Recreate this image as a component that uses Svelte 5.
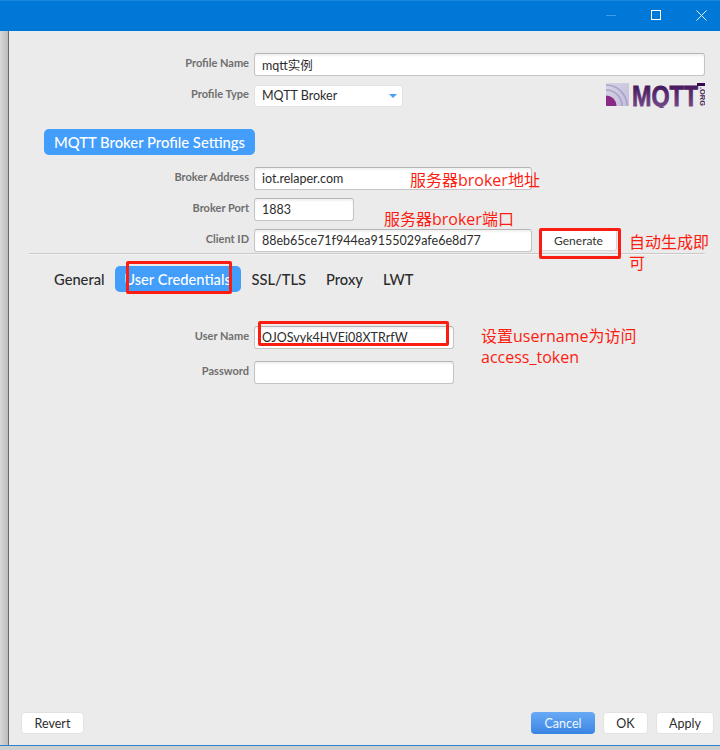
<script>
	const tabs = ['General', 'User Credentials', 'SSL/TLS', 'Proxy', 'LWT'];
	let activeTab = $state('User Credentials');

	let profileName = $state('mqtt实例');
	let brokerAddress = $state('iot.relaper.com');
	let brokerPort = $state('1883');
	let clientId = $state('88eb65ce71f944ea9155029afe6e8d77');
	let userName = $state('OJOSvyk4HVEi08XTRrfW');
	let password = $state('');
</script>

<div class="window">
	<header class="titlebar">
		<svg class="min" width="10" height="1" viewBox="0 0 10 1" aria-hidden="true"><rect width="10" height="1" fill="#3f9be3" /></svg>
		<svg class="max" width="10" height="10" viewBox="0 0 10 10" aria-hidden="true"><rect x="0.5" y="0.5" width="9" height="9" fill="none" stroke="#fff" /></svg>
		<svg class="close" width="11" height="11" viewBox="0 0 11 11" aria-hidden="true"><path d="M0.5 0.5l10 10M10.5 0.5l-10 10" fill="none" stroke="#e8f2fb" /></svg>
	</header>

	<div class="body">
		<div class="strip"></div>
		<main>
			<div class="row first">
				<label for="pname">Profile Name</label>
				<input id="pname" class="wide" bind:value={profileName} />
			</div>
			<div class="row type">
				<label for="ptype">Profile Type</label>
				<div id="ptype" class="select">MQTT Broker<span class="caret"></span></div>
				<svg class="logo" width="100" height="25" viewBox="0 0 100 25" aria-label="MQTT.org">
					<defs>
						<linearGradient id="mq" x1="0" y1="0" x2="0" y2="1">
							<stop offset="0" stop-color="#37084f" />
							<stop offset="1" stop-color="#7c5490" />
						</linearGradient>
						<linearGradient id="sq" x1="0" y1="0" x2="1" y2="1">
							<stop offset="0" stop-color="#d6d3e6" />
							<stop offset="1" stop-color="#c3bedb" />
						</linearGradient>
						<clipPath id="sqc"><rect width="23" height="23" rx="1" /></clipPath>
					</defs>
					<g transform="translate(1 0)" clip-path="url(#sqc)">
						<rect width="23" height="23" fill="url(#sq)" />
						<circle cx="0" cy="23" r="21" fill="none" stroke="#a9a4c9" stroke-width="1.6" />
						<circle cx="0" cy="23" r="16" fill="none" stroke="#a9a4c9" stroke-width="1.6" />
						<circle cx="0" cy="23" r="10.5" fill="#8b2a86" />
					</g>
					<text class="mqtt" x="27" y="22.5" textLength="66" lengthAdjust="spacingAndGlyphs" fill="url(#mq)" stroke="url(#mq)" stroke-width="0.8">MQTT</text>
					<rect x="92" y="0" width="8" height="3" fill="#37084f" />
					<text class="org" transform="translate(94.5 4) rotate(90)" textLength="19" lengthAdjust="spacingAndGlyphs">.ORG</text>
				</svg>
			</div>

			<div class="section"><span>MQTT Broker Profile Settings</span></div>

			<div class="row addr">
				<label for="addr">Broker Address</label>
				<input id="addr" class="mid" bind:value={brokerAddress} />
			</div>
			<div class="row port">
				<label for="port">Broker Port</label>
				<input id="port" class="short" bind:value={brokerPort} />
			</div>
			<div class="row client">
				<label for="cid">Client ID</label>
				<input id="cid" class="mid" bind:value={clientId} />
				<button class="generate">Generate</button>
			</div>

			<div class="tabs">
				{#each tabs as t}
					<button class="tab" class:active={activeTab === t} onclick={() => (activeTab = t)}>{t}</button>
				{/each}
			</div>

			<div class="row user">
				<label for="user">User Name</label>
				<input id="user" class="cred" bind:value={userName} />
			</div>
			<div class="row pass">
				<label for="pw">Password</label>
				<input id="pw" class="cred" type="password" bind:value={password} />
			</div>

			<footer>
				<button class="btn revert">Revert</button>
				<div class="right">
					<button class="btn cancel">Cancel</button>
					<button class="btn ok">OK</button>
					<button class="btn apply">Apply</button>
				</div>
			</footer>
		</main>
	</div>
	<div class="bottom"></div>

	<!-- red annotations drawn on top of the screenshot -->
	<div class="mark m-tab"></div>
	<div class="mark m-gen"></div>
	<div class="mark m-user"></div>
	<span class="note n-addr">服务器broker地址</span>
	<span class="note n-port">服务器broker端口</span>
	<span class="note n-gen">自动生成即<br />可</span>
	<span class="note n-user">设置username为访问<br />access_token</span>
</div>

<style>
	:global(body) {
		margin: 0;
		background: #ebebeb;
		font-family: Lato, "Noto Sans CJK SC", sans-serif;
	}
	.window {
		position: relative;
		width: 720px;
		height: 750px;
		display: flex;
		flex-direction: column;
		overflow: hidden;
		background: #ebebeb;
	}
	.titlebar {
		height: 31px;
		flex: none;
		box-sizing: border-box;
		border-top: 1px solid #1a86dc;
		background: #0078d7;
		display: flex;
		align-items: center;
		justify-content: flex-end;
		padding: 0 13px 2px 0;
	}
	.min {
		margin-right: 35px;
	}
	.max {
		margin-right: 35px;
	}
	.body {
		flex: 1;
		display: flex;
		min-height: 0;
	}
	.strip {
		width: 8px;
		flex: none;
		background: linear-gradient(90deg, #d8d8d8, #bcbcbc);
		border-right: 1px solid #6a6a6a;
	}
	main {
		flex: 1;
		display: flex;
		flex-direction: column;
		background: #ebebeb;
		padding: 0 15px 0 20px;
		min-width: 0;
	}
	.row {
		display: flex;
		align-items: center;
		position: relative;
	}
	label {
		width: 220px;
		margin-right: 5px;
		flex: none;
		text-align: right;
		font-size: 11px;
		font-weight: 700;
		color: #6f6f6f;
		padding-bottom: 4px;
	}
	input,
	.select {
		box-sizing: border-box;
		height: 23px;
		border: 1px solid #c4c4c4;
		border-top-color: #b4b4b4;
		border-radius: 3px;
		background: #fff;
		font-family: Lato, "Noto Sans CJK SC", sans-serif;
		font-size: 12.5px;
		color: #2c2c2c;
		padding: 0 7px 0;
		outline: none;
		box-shadow: inset 0 2px 2px #f2f2f2;
	}
	.wide {
		width: 451px;
	}
	.mid {
		width: 278px;
	}
	.short {
		width: 100px;
	}
	.cred {
		width: 200px;
	}
	.first {
		margin-top: 22px;
	}
	.type {
		margin-top: 7px;
		justify-content: space-between;
	}
	.select {
		width: 149px;
		height: 22px;
		border-color: #e2e2e2;
		box-shadow: none;
		display: flex;
		align-items: center;
		justify-content: space-between;
		margin-right: auto;
		padding-right: 5px;
	}
	.caret {
		width: 0;
		height: 0;
		border: 4px solid transparent;
		border-top: 4px solid #4a9df8;
		border-bottom: 0;
		margin-top: 1px;
	}
	.logo {
		flex: none;
		margin-top: 0;
	}
	.mqtt {
		font-family: "Liberation Sans", sans-serif;
		font-weight: 700;
		font-size: 30px;
	}
	.org {
		font-family: "Liberation Sans", sans-serif;
		font-weight: 700;
		font-size: 7px;
		fill: #3e1a58;
	}
	.section {
		margin: 21px 0 0 15px;
		display: flex;
	}
	.section span {
		display: block;
		width: 211px;
		height: 26px;
		box-sizing: border-box;
		background: #429dfb;
		border-radius: 5px;
		color: #fff;
		font-size: 14.8px;
		font-weight: 500;
		line-height: 26px;
		text-align: center;
	}
	.addr {
		margin-top: 12px;
	}
	.port,
	.client {
		margin-top: 8px;
	}
	.generate {
		box-sizing: border-box;
		width: 76px;
		height: 21px;
		margin-left: 9px;
		border: 0;
		border-right: 1px solid #d8d8d8;
		border-bottom: 1px solid #d8d8d8;
		border-radius: 3px;
		background: #fff;
		font-family: Lato, sans-serif;
		font-size: 12px;
		color: #333;
		padding: 0;
	}
	.tabs {
		margin-top: 1px;
		border-top: 1px solid #c9c9c9;
		box-shadow: inset 0 1px 0 #f5f5f5;
		padding: 12px 0 0 17px;
		display: flex;
	}
	.tab {
		height: 26px;
		border: 0;
		background: none;
		font-family: Lato, sans-serif;
		font-size: 14.7px;
		font-weight: 500;
		color: #2c2c2c;
		padding: 0 8px;
		margin-right: 3px;
		border-radius: 5px;
	}
	.tab:nth-child(1) {
		margin-right: 2px;
	}
	.tab:nth-child(3) {
		margin-right: 4px;
	}
	.tab:nth-child(4) {
		margin-right: 4px;
	}
	.tab.active {
		background: #429dfb;
		color: #fff;
		width: 126px;
		padding: 0;
	}
	.user {
		margin-top: 34px;
	}
	.pass {
		margin-top: 12px;
	}
	footer {
		margin-top: auto;
		margin-bottom: 11px;
		margin-left: -8px;
		margin-right: -9px;
		display: flex;
		justify-content: space-between;
	}
	.right {
		display: flex;
	}
	.btn {
		box-sizing: border-box;
		height: 22px;
		border: 1px solid #e2e2e2;
		border-radius: 4px;
		background: #fff;
		font-family: Lato, sans-serif;
		font-size: 12.5px;
		color: #2c2c2c;
		padding: 0;
	}
	.revert {
		width: 63px;
	}
	.cancel {
		width: 64px;
		margin-right: 8px;
		border: 0;
		color: #eef6ff;
		background: linear-gradient(#69aaf6, #3a85e3);
	}
	.ok {
		width: 45px;
		margin-right: 8px;
	}
	.apply {
		width: 58px;
	}
	.bottom {
		height: 5px;
		flex: none;
		box-sizing: border-box;
		border-top: 1px solid #2e83d2;
		background: #cfcfcf;
	}
	.mark {
		position: absolute;
		box-sizing: border-box;
		border: 3px solid #fb1d11;
		border-radius: 2px;
	}
	.m-tab {
		left: 126px;
		top: 261px;
		width: 106px;
		height: 33px;
	}
	.m-gen {
		left: 539px;
		top: 228px;
		width: 82px;
		height: 31px;
	}
	.m-user {
		left: 258px;
		top: 321px;
		width: 191px;
		height: 25px;
	}
	.note {
		position: absolute;
		font-family: "Open Sans", "Noto Sans CJK SC", sans-serif;
		font-size: 16px;
		line-height: 21px;
		color: #fb1d11;
		white-space: nowrap;
	}
	.n-addr {
		left: 410px;
		top: 170px;
	}
	.n-port {
		left: 384px;
		top: 209px;
	}
	.n-gen {
		left: 629px;
		top: 232px;
	}
	.n-user {
		left: 481px;
		top: 326px;
	}
</style>
